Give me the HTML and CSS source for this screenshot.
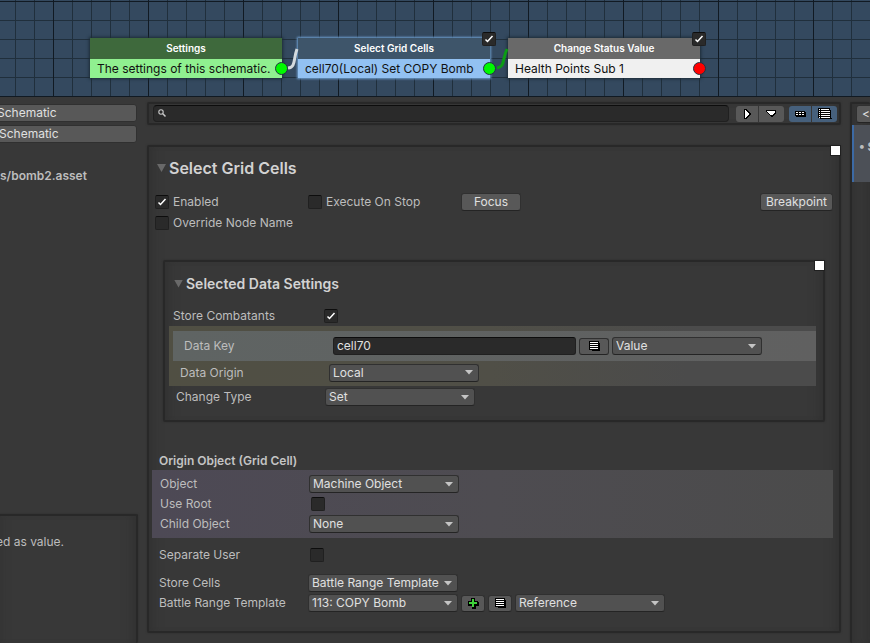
FILE: index.html
```html
<!DOCTYPE html>
<html lang="en">
<head>
  <meta charset="UTF-8" />
  <meta name="viewport" content="width=device-width, initial-scale=1.0"/>
  <title>Schematic Editor</title>
  <link rel="stylesheet" href="styles.css">
</head>
<body>
  <!-- Node graph -->
  <section class="graph">
    <div class="node node-settings">
      <div class="node-title">Settings</div>
      <div class="node-text">The settings of this schematic.</div>
      <span class="port"></span>
    </div>
    <div class="node node-select">
      <div class="node-title">Select Grid Cells</div>
      <div class="node-text">cell70(Local) Set COPY Bomb</div>
      <input class="node-check" type="checkbox" aria-label="Select Grid Cells enabled" checked />
      <span class="port"></span>
    </div>
    <div class="node node-status">
      <div class="node-title">Change Status Value</div>
      <div class="node-text">Health Points Sub 1</div>
      <input class="node-check" type="checkbox" aria-label="Change Status Value enabled" checked />
      <span class="port port-end"></span>
    </div>
    <svg class="wires" width="720" height="97" fill="none" stroke-width="3">
      <path d="M288 68 C296 67 293 60 297 49" stroke="#d4dade"/>
      <path d="M497 68 C505 67 502 60 507 49" stroke="#0c9c14"/>
    </svg>
  </section>

  <main class="editor">
    <aside class="sidebar">
      <button class="side-btn">Schematic</button>
      <button class="side-btn">Schematic</button>
      <div class="file">s/bomb2.asset</div>
      <div class="help box">ed as value.</div>
    </aside>

    <section class="inspector">
      <div class="toolbar box">
        <div class="search">
          <svg width="9" height="9" fill="none" stroke="#c8c8c8"><circle cx="3" cy="3" r="2.2" stroke-width="1.1"/><path d="M4.8 4.8L7.5 7.5" stroke-width="1.5"/></svg>
          <input type="text" aria-label="Search" />
        </div>
        <div class="group">
          <button class="tool" aria-label="Next">
            <svg width="8" height="10" shape-rendering="crispEdges"><path d="M1 0h2l5 5-4 5H1z" fill="#000"/><path d="M2 1l4 4-4 4z" fill="#fff"/></svg>
          </button>
          <button class="tool wide" aria-label="Menu">
            <svg width="11" height="8" shape-rendering="crispEdges"><path d="M0 0h10v3L6 7H5L0 2z" fill="#000"/><path d="M1 1h8v1L6 5H4L1 2z" fill="#fff"/></svg>
          </button>
        </div>
        <div class="group toggles">
          <button class="tool" aria-label="Compact view">
            <svg width="11" height="7" shape-rendering="crispEdges"><path d="M0 1h10v1h1v5H1V6H0z" fill="#000"/><path d="M1 2h2v1H1zM4 2h2v1H4zM7 2h2v1H7zM1 4h2v1H1zM4 4h2v1H4zM7 4h2v1H7z" fill="#fff"/></svg>
          </button>
          <button class="tool wide" aria-label="List view">
            <svg width="14" height="11" shape-rendering="crispEdges"><path d="M0 0h12v2h1v8h1v1H2v-1H0z" fill="#000"/><path d="M1 1h1v1H1zM3 1h8v1H3zM1 3h1v1H1zM3 3h9v1H3zM1 5h1v1H1zM3 5h9v1H3zM1 7h1v1H1zM3 7h9v1H3zM1 9h1v1H1zM3 9h9v1H3z" fill="#fff"/></svg>
          </button>
        </div>
      </div>

      <div class="panel box">
        <span class="corner"></span>
        <h1 class="title"><span class="fold"></span>Select Grid Cells</h1>
        <div class="options">
          <label class="check"><input type="checkbox" checked /> Enabled</label>
          <label class="check"><input type="checkbox" /> Execute On Stop</label>
          <button class="btn focus">Focus</button>
          <button class="btn breakpoint">Breakpoint</button>
          <label class="check override"><input type="checkbox" /> Override Node Name</label>
        </div>

        <div class="nested box">
          <span class="corner"></span>
          <h2 class="title"><span class="fold"></span>Selected Data Settings</h2>
          <div class="row">
            <label for="combatants">Store Combatants</label>
            <input class="indent" type="checkbox" id="combatants" checked />
          </div>
          <div class="band olive">
            <div class="row key">
              <label for="key">Data Key</label>
              <input class="field" type="text" id="key" value="cell70" />
              <button class="btn icon large" aria-label="Select key">
                <svg width="11" height="10" shape-rendering="crispEdges"><path d="M0 0h10v2h1v8H3V9H0z" fill="#000"/><path d="M1 1h8v1H1zM1 3h8v1H1zM1 5h8v1H1zM1 7h8v1H1z" fill="#fff"/></svg>
              </button>
              <select aria-label="Key type"><option>Value</option></select>
            </div>
            <div class="row origin">
              <label for="origin">Data Origin</label>
              <select id="origin"><option>Local</option></select>
            </div>
          </div>
          <div class="row change">
            <label for="change">Change Type</label>
            <select id="change"><option>Set</option></select>
          </div>
        </div>

        <h3>Origin Object (Grid Cell)</h3>
        <div class="band violet">
          <div class="row">
            <label for="object">Object</label>
            <select id="object"><option>Machine Object</option></select>
          </div>
          <div class="row">
            <label for="root">Use Root</label>
            <input class="indent" type="checkbox" id="root" />
          </div>
          <div class="row">
            <label for="child">Child Object</label>
            <select id="child"><option>None</option></select>
          </div>
        </div>
        <div class="row user">
          <label for="user">Separate User</label>
          <input class="indent" type="checkbox" id="user" />
        </div>
        <div class="row">
          <label for="cells">Store Cells</label>
          <select id="cells"><option>Battle Range Template</option></select>
        </div>
        <div class="row">
          <label for="range">Battle Range Template</label>
          <select id="range"><option>113: COPY Bomb</option></select>
          <button class="btn icon" aria-label="Add">
            <svg width="11" height="11" shape-rendering="crispEdges"><path d="M3 0h4v3h3v1h1v4H8v3H4V8H0V3h3z" fill="#000"/><path d="M4 1h2v3h3v2H6v3H4V6H1V4h3z" fill="#3fd03a"/></svg>
          </button>
          <button class="btn icon" aria-label="Select template">
            <svg width="11" height="10" shape-rendering="crispEdges"><path d="M0 0h10v2h1v8H3V9H0z" fill="#000"/><path d="M1 1h8v1H1zM1 3h8v1H1zM1 5h8v1H1zM1 7h8v1H1z" fill="#fff"/></svg>
          </button>
          <select aria-label="Template source"><option>Reference</option></select>
        </div>
      </div>
    </section>

    <aside class="list box">
      <button class="btn back">&lt;</button>
      <div class="item">• S</div>
    </aside>
  </main>
</body>
</html>
```
FILE: styles.css
```css
* {
  box-sizing: border-box;
}
body {
  margin: 0;
  min-height: 100vh;
  display: flex;
  flex-direction: column;
  background: #383838;
  color: #bdbdbd;
  font: 12px/20px Inter, "Liberation Sans", sans-serif;
  overflow: hidden;
}
button, input, select {
  font: inherit;
  color: #e0e0e0;
  margin: 0;
}
svg {
  display: block;
  flex: none;
}

/* Graph */
.graph {
  position: relative;
  height: 97px;
  flex: none;
  overflow: hidden;
  background-color: #34495f;
  background-image:
    linear-gradient(90deg, #111a23 1px, transparent 1px),
    linear-gradient(#111a23 1px, transparent 1px),
    linear-gradient(90deg, #202f3c 1px, transparent 1px),
    linear-gradient(#202f3c 1px, transparent 1px);
  background-size: 95px 95px, 95px 95px, 19px 19px, 19px 19px;
  background-position: 53px 0, 0 1px, 53px 0, 0 1px;
}
.wires {
  position: absolute;
  left: 0;
  top: 0;
}
.node {
  position: absolute;
  top: 38px;
  width: 192px;
  height: 40px;
  box-shadow: 0 0 3px 1px #1c2a35;
}
.node-title {
  height: 21px;
  text-align: center;
  color: #fff;
  font-size: 10px;
  font-weight: 600;
}
.node-text {
  height: 19px;
  padding-left: 7px;
  line-height: 20px;
  white-space: nowrap;
  color: #111;
}
.node-settings {
  left: 90px;
  background: #90f090;
}
.node-settings .node-title {
  background: #3e693c;
}
.node-select {
  left: 298px;
  background: #92c1f2;
  box-shadow: 0 0 2px 1px #6d9dcd;
}
.node-select .node-title {
  background: #3e556a;
}
.node-status {
  left: 508px;
  background: #f0f0f0;
}
.node-status .node-title {
  background: #696969;
}
.port {
  position: absolute;
  right: -6px;
  top: 24px;
  width: 13px;
  height: 13px;
  border: 1px solid #234;
  border-radius: 50%;
  background: #00f800;
}
.port-end {
  background: #f00;
}
.node .node-check {
  position: absolute;
  right: -6px;
  top: -6px;
}

/* Layout */
.editor {
  flex: 1;
  display: flex;
  gap: 9px;
  padding-top: 5px;
}
.box {
  border: 2px solid #282828;
  border-radius: 2px;
  box-shadow: 0 0 2px #2c2c2c, inset 12px 0 12px -10px #303030, inset -12px 0 12px -10px #303030;
}
.sidebar {
  flex: none;
  width: 138px;
  display: flex;
  flex-direction: column;
  gap: 3px;
  padding-top: 2px;
}
.side-btn {
  width: 141px;
  height: 18px;
  margin-left: -4px;
  padding: 0;
  border: 1px solid #303030;
  border-radius: 3px;
  background: #585858;
  line-height: 16px;
  text-align: left;
}
.side-btn + .side-btn {
  padding-left: 2px;
}
.file {
  margin-top: 20px;
  font-weight: 600;
}
.help {
  margin-top: auto;
  margin-left: -6px;
  min-height: 129px;
  padding-top: 16px;
  border-bottom: 0;
}
.inspector {
  flex: 1;
  min-width: 0;
}
.list {
  flex: none;
  width: 20px;
  border-right: 0;
  border-bottom: 0;
  overflow: hidden;
}
.back {
  display: block;
  width: 30px;
  margin: 1px 0 0 4px;
  padding: 0 3px;
  text-align: left;
}
.item {
  height: 57px;
  margin-top: 2px;
  padding: 12px 0 0 5px;
  border-left: 2px solid #3c6aa5;
  background: #4c5057;
  white-space: nowrap;
  font-weight: 700;
}

/* Toolbar */
.toolbar {
  display: flex;
  align-items: center;
  gap: 5px;
  height: 23px;
  padding: 0 2px 0 4px;
}
.search {
  flex: 1;
  display: flex;
  align-items: center;
  height: 17px;
  margin-right: 2px;
  padding-left: 4px;
  border: 1px solid #202020;
  border-top-color: #0d0d0d;
  border-radius: 4px;
  background: #2a2a2a;
}
.search input {
  flex: 1;
  min-width: 0;
  height: 15px;
  border: 0;
  background: none;
}
.group {
  display: flex;
  gap: 1px;
  border-radius: 3px;
  overflow: hidden;
}
.tool {
  display: flex;
  align-items: center;
  justify-content: center;
  width: 22px;
  height: 16px;
  padding: 0;
  border: 0;
  background: #585858;
}
.tool.wide {
  width: 25px;
}
.toggles .tool {
  background: #46607c;
}

/* Panel */
.panel {
  position: relative;
  margin-top: 20px;
  padding: 0 6px 18px 3px;
}
.corner {
  position: absolute;
  right: -2px;
  top: -2px;
  width: 11px;
  height: 11px;
  border: 1px solid #202020;
  background: #fff;
}
.title {
  display: flex;
  align-items: center;
  gap: 3px;
  height: 42px;
  margin: 0;
  padding-left: 5px;
  color: #d2d2d2;
  font-size: 16px;
  font-weight: 600;
}
.fold {
  width: 9px;
  height: 8px;
  background: #696969;
  clip-path: polygon(0 0, 100% 0, 50% 100%);
}
.options {
  display: grid;
  grid-template-columns: 153px 153px auto 1fr;
  grid-auto-rows: 21px;
  align-items: center;
  margin-top: 2px;
  padding-left: 3px;
}
.check {
  display: flex;
  align-items: center;
  gap: 4px;
}
.override {
  grid-column: span 2;
}
input[type="checkbox"] {
  appearance: none;
  flex: none;
  width: 14px;
  height: 14px;
  border: 1px solid #202020;
  border-top-color: #0d0d0d;
  border-radius: 2px;
  background: #2a2a2a;
}
input[type="checkbox"]:checked {
  background: #2a2a2a url("data:image/svg+xml,%3Csvg xmlns='http://www.w3.org/2000/svg' width='12' height='12'%3E%3Cpath d='M2.5 6.5L4.5 8.5L9.5 3' fill='none' stroke='%23fff' stroke-width='1.5'/%3E%3C/svg%3E") center no-repeat;
}
.btn {
  height: 18px;
  padding: 0 5px;
  border: 1px solid #303030;
  border-bottom-color: #242424;
  border-radius: 3px;
  background: #585858;
  line-height: 16px;
}
.focus {
  width: 60px;
}
.breakpoint {
  justify-self: end;
}
.btn.icon {
  display: flex;
  align-items: center;
  justify-content: center;
  width: 24px;
  height: 17px;
  padding: 0;
}
.btn.large {
  width: 30px;
}
select {
  appearance: none;
  width: 150px;
  height: 18px;
  padding: 0 3px;
  border: 1px solid #303030;
  border-bottom-color: #242424;
  border-radius: 3px;
  background: #515151 url("data:image/svg+xml,%3Csvg xmlns='http://www.w3.org/2000/svg' width='8' height='5'%3E%3Cpath d='M0 0h8L4 4.5z' fill='%23c4c4c4'/%3E%3C/svg%3E") right 5px center no-repeat;
  line-height: 16px;
}
.field {
  width: 243px;
  height: 18px;
  padding: 0 3px;
  border: 1px solid #202020;
  border-top-color: #0d0d0d;
  border-radius: 3px;
  background: #2a2a2a;
}
.row {
  display: flex;
  align-items: center;
  gap: 3px;
  height: 20px;
  padding-left: 7px;
}
.row label {
  width: 146px;
  white-space: nowrap;
}
.row .indent {
  margin-left: 2px;
}

/* Nested settings */
.nested {
  position: relative;
  margin: 27px 8px 0 11px;
  padding: 0 7px 12px 4px;
}
.nested .title {
  height: 43px;
  font-size: 14px;
}
.nested .row {
  height: 21px;
  padding-left: 4px;
}
.olive {
  padding: 5px 0 0 4px;
  background: linear-gradient(90deg, #504f43, #504f47 50%, #4b4b4b 80%);
}
.nested .key {
  height: 30px;
  padding-left: 11px;
  background: linear-gradient(90deg, #5f6463, #606060);
}
.nested .origin {
  height: 25px;
  padding: 0 0 2px 7px;
}
.nested .change {
  height: 22px;
  padding-left: 7px;
}
h3 {
  height: 18px;
  margin: 30px 0 0;
  padding-left: 7px;
  font-size: 12px;
  font-weight: 600;
  line-height: 18px;
  color: #c4c4c4;
}
.violet {
  padding: 4px 0 4px 1px;
  background: linear-gradient(90deg, #4d4955, #4e4c51 50%, #4b4b4b);
}
.user {
  margin: 7px 0 8px;
}
```
